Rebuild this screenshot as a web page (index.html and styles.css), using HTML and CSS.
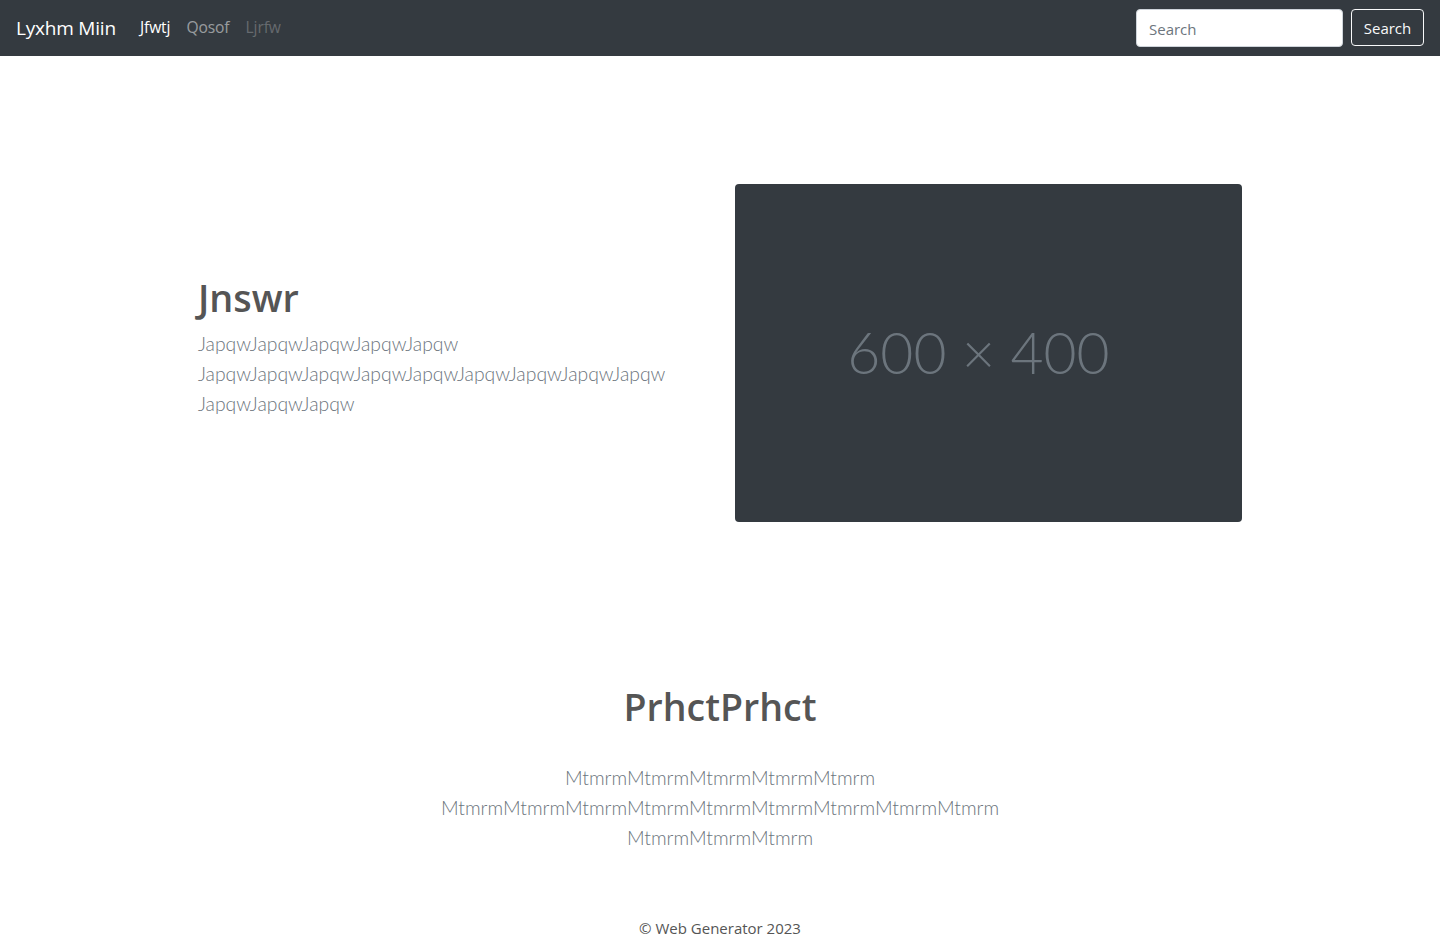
FILE: index.html
```html
<!DOCTYPE html>
<html lang="en">
<head>
<meta charset="utf-8">
<title>Lyxhm Miin</title>
<link rel="stylesheet" href="styles.css">
</head>
<body>
<nav class="navbar">
  <a class="brand" href="#">Lyxhm Miin</a>
  <ul class="nav">
    <li><a class="nav-link active" href="#">Jfwtj</a></li>
    <li><a class="nav-link" href="#">Qosof</a></li>
    <li><a class="nav-link disabled" href="#">Ljrfw</a></li>
  </ul>
  <form class="search">
    <input class="search-input" type="search" placeholder="Search">
    <button class="search-btn" type="button">Search</button>
  </form>
</nav>

<section class="hero">
  <div class="hero-text">
    <h1 class="hero-title">Jnswr</h1>
    <p class="lead">JapqwJapqwJapqwJapqwJapqw<br>JapqwJapqwJapqwJapqwJapqwJapqwJapqwJapqwJapqw<br>JapqwJapqwJapqw</p>
  </div>
  <div class="hero-media">
    <div class="placeholder"><span>600 × 400</span></div>
  </div>
</section>

<section class="features">
  <h2 class="features-title">PrhctPrhct</h2>
  <p class="features-lead">MtmrmMtmrmMtmrmMtmrmMtmrm<br>MtmrmMtmrmMtmrmMtmrmMtmrmMtmrmMtmrmMtmrmMtmrm<br>MtmrmMtmrmMtmrm</p>
</section>

<footer class="footer">© Web Generator 2023</footer>
</body>
</html>
```

FILE: styles.css
```css
* { box-sizing: border-box; }
html, body { margin: 0; padding: 0; }
body {
  font-family: "Open Sans", "Noto Sans", sans-serif;
  font-size: 16px;
  line-height: 1.5;
  color: #212529;
  background: #fff;
}

.navbar {
  height: 56px;
  background: #343a40;
  display: flex;
  align-items: center;
  padding: 8px 16px;
}
.brand {
  color: #fff;
  text-decoration: none;
  font-size: 19px;
  letter-spacing: -0.2px;
  line-height: 30px;
  margin-right: 16px;
}
.nav {
  list-style: none;
  margin: 0;
  padding: 0;
  display: flex;
  flex: 1;
}
.nav-link {
  display: block;
  padding: 8px;
  text-decoration: none;
  color: rgba(255,255,255,.5);
  font-size: 15.6px;
  letter-spacing: -0.1px;
}
.nav-link.active { color: #fff; }
.nav-link.disabled { color: rgba(255,255,255,.25); }

.search { display: flex; gap: 8px; }
.search-input {
  width: 207px;
  height: 38px;
  border: 1px solid #ced4da;
  border-radius: 4px;
  padding: 7px 12px 5px;
  font-family: inherit;
  font-size: 15px;
  color: #495057;
  background: #fff;
}
.search-input::placeholder { color: #6c757d; }
.search-btn {
  width: 73px;
  height: 37px;
  padding: 0;
  border: 1px solid #f8f9fa;
  border-radius: 4px;
  background: transparent;
  color: #f8f9fa;
  font-family: inherit;
  font-size: 15px;
}

.hero {
  display: flex;
  align-items: center;
  width: 1110px;
  margin: 0 auto;
  padding: 128px 0;
}
.hero-text { flex: 0 0 537px; padding-left: 33px; padding-bottom: 12px; }
.hero-title {
  margin: 0 0 8px;
  font-size: 37.8px;
  font-weight: 600;
  line-height: 1.2;
  color: #555;
}
.lead {
  margin: 0;
  font-family: Lato, "Open Sans", sans-serif;
  font-size: 19.35px;
  font-weight: 300;
  line-height: 30px;
  color: #6c757d;
}
.hero-media { flex: 1; padding-left: 33px; }
.placeholder {
  width: 507px;
  height: 338px;
  background: #343a40;
  border-radius: 4px;
  display: flex;
  align-items: center;
  justify-content: center;
}
.placeholder span {
  font-family: Lato, sans-serif;
  font-weight: 300;
  font-size: 57px;
  color: #6c757d;
  margin-right: 20px;
}

.features {
  text-align: center;
  padding: 34px 0 0;
}
.features-title {
  margin: 0 0 34px;
  font-size: 37.5px;
  font-weight: 600;
  line-height: 1.2;
  color: #555;
}
.features-lead {
  margin: 0;
  font-family: Lato, sans-serif;
  font-size: 19.45px;
  font-weight: 300;
  line-height: 30px;
  color: #6c757d;
}

.footer {
  text-align: center;
  padding: 64px 0 8px;
  font-size: 15px;
  color: #555;
}
```
